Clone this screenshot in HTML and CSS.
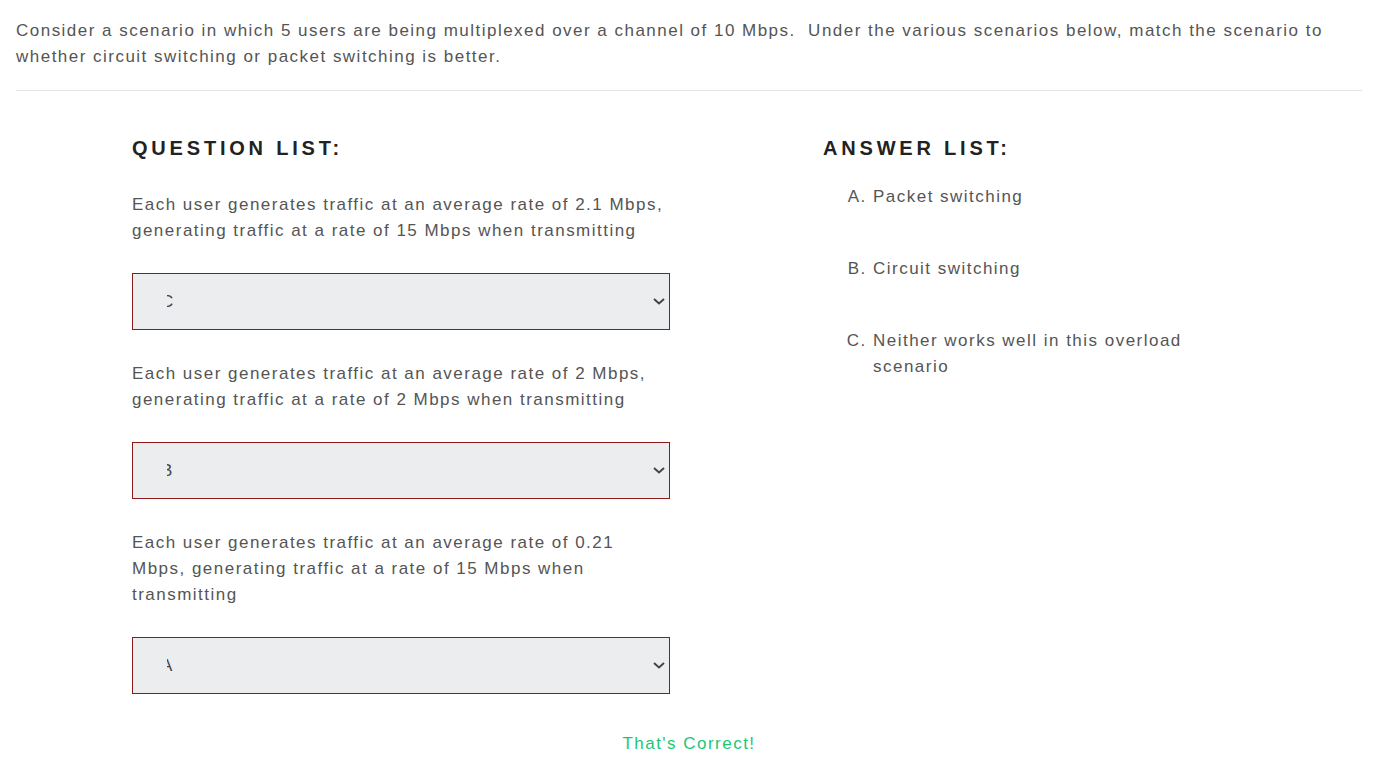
FILE: index.html
```html
<!DOCTYPE html>
<html>
<head>
<meta charset="utf-8">
<link rel="stylesheet" href="styles.css">
</head>
<body>
<p class="intro">Consider a scenario in which 5 users are being multiplexed over a channel of 10 Mbps.&nbsp; Under the various scenarios below, match the scenario to whether circuit switching or packet switching is better.</p>
<hr class="rule">
<div class="match">
  <div class="questions">
    <h2 class="heading">QUESTION LIST:</h2>
    <div class="q">
      <p class="q-text">Each user generates traffic at an average rate of 2.1 Mbps, generating traffic at a rate of 15 Mbps when transmitting</p>
      <div class="select"><span class="clip"><span class="glyph">C</span></span><svg class="chev" viewBox="0 0 12 7" width="12" height="7"><path d="M1 1 L6 5.5 L11 1" fill="none" stroke="#444" stroke-width="2"/></svg></div>
    </div>
    <div class="q">
      <p class="q-text">Each user generates traffic at an average rate of 2 Mbps, generating traffic at a rate of 2 Mbps when transmitting</p>
      <div class="select"><span class="clip"><span class="glyph">B</span></span><svg class="chev" viewBox="0 0 12 7" width="12" height="7"><path d="M1 1 L6 5.5 L11 1" fill="none" stroke="#444" stroke-width="2"/></svg></div>
    </div>
    <div class="q">
      <p class="q-text">Each user generates traffic at an average rate of 0.21 Mbps, generating traffic at a rate of 15 Mbps when transmitting</p>
      <div class="select"><span class="clip"><span class="glyph">A</span></span><svg class="chev" viewBox="0 0 12 7" width="12" height="7"><path d="M1 1 L6 5.5 L11 1" fill="none" stroke="#444" stroke-width="2"/></svg></div>
    </div>
  </div>
  <div class="answers">
    <h2 class="heading">ANSWER LIST:</h2>
    <ol class="alist">
      <li>Packet switching</li>
      <li>Circuit switching</li>
      <li>Neither works well in this overload scenario</li>
    </ol>
  </div>
</div>
<p class="result">That's Correct!</p>
</body>
</html>
```
FILE: styles.css
```css
html, body {
  margin: 0;
  padding: 0;
  background: #fff;
}
body {
  padding: 18px 27px 0 16px;
  font-family: "Liberation Sans", Arial, sans-serif;
  font-size: 17px;
  line-height: 26px;
  letter-spacing: 1.48px;
  color: #555;
}
.intro {
  margin: 0;
}
.rule {
  border: 0;
  border-top: 1px solid #e4e4e4;
  margin: 20px 0 0 0;
  height: 0;
}
.match {
  display: grid;
  grid-template-columns: 538px 420px;
  column-gap: 153px;
  padding-left: 116px;
  margin-top: 45px;
}
.heading {
  margin: 0;
  font-size: 20px;
  line-height: 24px;
  font-weight: bold;
  letter-spacing: 3.8px;
  color: #222;
}
.q-text {
  margin: 32px 0 29px 0;
}
.q:not(:first-of-type) .q-text {
  margin-top: 31px;
}
.select {
  box-sizing: border-box;
  height: 57px;
  border: 1px solid #8b1a1a;
  background: #ecedef;
  display: flex;
  align-items: center;
  padding: 0 4px 0 34px;
  color: #444;
}
.clip {
  display: inline-block;
  width: 6px;
  overflow: hidden;
  white-space: nowrap;
}
.glyph {
  display: inline-block;
  margin-left: -6px;
}
.chev {
  margin-left: auto;
  width: 12px;
  height: 7px;
}
.alist {
  margin: 24px 0 0 0;
  padding-left: 50px;
  list-style-type: upper-alpha;
}
.alist li {
  margin-bottom: 46px;
  width: 340px;
}
.result {
  margin: 37px 0 0 0;
  text-align: center;
  color: #18c874;
  padding-left: 0;
}
```
